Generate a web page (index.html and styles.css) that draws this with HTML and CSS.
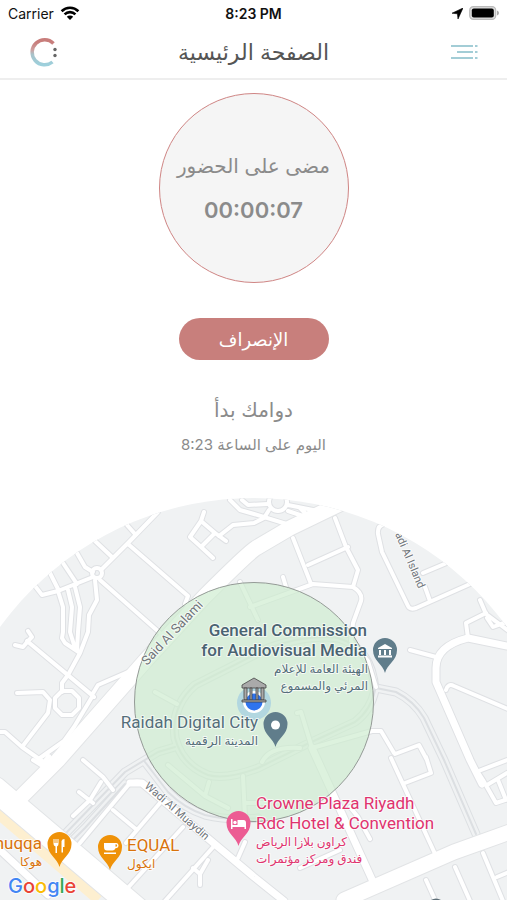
FILE: index.html
```html
<!DOCTYPE html>
<html lang="ar" dir="rtl">
<head>
<meta charset="utf-8">
<meta name="viewport" content="width=device-width, initial-scale=1">
<title>الصفحة الرئيسية</title>
<link rel="stylesheet" href="styles.css">
</head>
<body>
<div class="status" dir="ltr">
  <div class="status-side">
    <span>Carrier</span>
    <svg width="20" height="14" viewBox="0 0 20 14" aria-hidden="true">
      <g fill="none" stroke="#000" stroke-width="2.6"><path d="M1.6 5.2a12 12 0 0 1 16.8 0"/><path d="M4.6 8.4a7.6 7.6 0 0 1 10.8 0"/></g>
      <path d="M10 14 6.8 10.7a4.6 4.6 0 0 1 6.4 0z"/>
    </svg>
  </div>
  <time class="status-time">8:23 PM</time>
  <div class="status-side status-end">
    <svg width="11" height="11" viewBox="0 0 11 11" aria-hidden="true"><path d="M11 0 6 11 5.400 5.800 0 5.200z" stroke="#000" stroke-width=".6"/></svg>
    <svg width="30" height="14" viewBox="0 0 30 14" aria-hidden="true">
      <rect x=".7" y=".7" width="26" height="12.6" rx="3.6" fill="#ddd" stroke="#bbb" stroke-width="1.2"/>
      <rect x="2.8" y="2.4" width="22" height="9.2" rx="2"/>
      <path d="M28 4.6q2 .8 2 2.400t-2 2.400z" fill="#aaa"/>
    </svg>
  </div>
</div>
<header class="header">
  <button class="icon-button" type="button" aria-label="القائمة">
    <svg width="28" height="18" viewBox="0 0 28 18" aria-hidden="true">
      <path d="M1 3h22M7 9h16M1 15h22M25 3h2.500M25 9h2.500M25 15h2.500" fill="none" stroke="#a3cdd6" stroke-width="2"/>
    </svg>
  </button>
  <h1 class="title">الصفحة الرئيسية</h1>
  <a class="icon-button" href="#" aria-label="الرئيسية">
    <svg width="28" height="30" viewBox="0 0 28 30" aria-hidden="true">
      <defs><linearGradient id="ring" x1="0" y1="0" x2="0" y2="1"><stop offset=".1" stop-color="#c87d7b"/><stop offset=".4" stop-color="#cda09f"/><stop offset=".58" stop-color="#a9c2c9"/><stop offset="1" stop-color="#9dd0dc"/></linearGradient></defs>
      <path d="M24.500 6.500A12.500 12.500 0 1 0 23.500 25" fill="none" stroke="url(#ring)" stroke-width="3.500"/>
      <circle cx="26" cy="12.500" r="1.700" fill="#666"/><circle cx="26" cy="18.500" r="1.700" fill="#666"/>
    </svg>
  </a>
</header>
<main class="main">
  <section class="timer">
    <p class="timer-label">مضى على الحضور</p>
    <time class="timer-value">00:00:07</time>
  </section>
  <button class="leave" type="button">الإنصراف</button>
  <p class="shift">دوامك بدأ</p>
  <p class="shift-time">اليوم على الساعة 8:23</p>
  <svg class="map" viewBox="0 498 507 402" direction="ltr" role="img" aria-label="Map">
    <defs>
      <clipPath id="dome"><circle cx="253.500" cy="811.600" r="313.600"/></clipPath>
      <g id="minor">
        <path d="M127 525l8 9M95 541l17 16M77 553l8 14 8 5M63 563l14 21M50 573l9 18M35 586l7 9 16-4 35-14M58 591l5 16 0 25-1 6 3 5 15 10M68 590l4 17-2 25 5 16M75 587l5 20-2 25-1 18M95 580l2 20-8 15-1 17-8 21-12 22-6 8v9"/>
        <path d="M158 512l-30 31-27 27M128 544l60 52-3 8M100 580l60 53"/>
        <circle cx="97" cy="573" r="5"/>
        <path d="M62 691h10l7 7v10l-7 7H62l-7-7v-10zM27 641l65 54M15 645l8 2 5-6 4-4-4-6M27 641l67 56M92 695l6-10 30-13M92 697l-18 30-10 14-24 17M17 693l26-1 7 8-2 13-26 34M0 732h5l17 15 20 14M33 760l8 5 8-9"/>
        <path d="M204 512l-3 9-11 16 10 9 13 12M201 521l14 12 11 8M215 533l-14 14M219 536l14-11 21-2 10-5 5-8M230 500l10 10 14 4 36 11M242 500l6 5 20-1"/>
        <circle cx="278" cy="502" r="9"/><path d="M288 505l30 6M288 511l24 8M300 508l8 8"/>
        <path d="M293 538l18 46M308 565l40-18M335 518l11 29 12 23-5 17M250 607l63-23 40 3q10 6 8 14l-8 22-2 18 17 20 8 26M283 577l3 10"/>
        <path d="M384 524q-7 2-6 10l4 18 26 54q2 4 8 2l54-24M423 573l26-11M425 587l5 14M480 600l6 14 24 18M486 613l-20 10 2 15M487 618l6 9 16-6M410 650l26 7M446 690q2-7 8-4l54 23"/>
        <path d="M312 748l60-17 9 0 13 22M395 754l24-9 8 15M405 783l26-10-5-16M391 758l45 98M350 807l8 10 12 22M340 850l-40 18M470 760l13 20 13 23 12-4M476 772l31-12M487 785l20-12M498 780l8 20M426 880l10 22M455 867l15 34M483 853l20 48M497 877l12-5"/>
        <path d="M80 843l50-60q7-3 14 0M113 810l24 20M160 803l-34 40M183 827l-58 64M215 845l-50 56M193 868l7 6v11M200 874l8-14M238 858l7-16M83 760l20 17 10 13M101 782l-11 18-17 16M79 792l14 11"/>
        <path d="M240 582l18 38M155 692l22 12M297 713l4-1 11 36M168 765l37 31 23 12M205 796l4-14M243 776l2 42M245 803h20M262 762q8-16 38-14"/>
      </g>
      <g id="medium">
        <path d="M507 646l-39-8q-32 8-32 30v14l34 78 12 24M312 748l63 138M130 783h12l112 94 30 24M0 850l48 45"/>
      </g>
      <g id="rail">
        <path d="M376 688l20 4q18 9 28 26l20 42 32 74M67 846l18-18 40-44M125 772l33-20 17-5M125 772l-60 62M145 762l23 30q16 16 37 23 25 6 53 3"/>
        <path d="M375 690q-4 20-20 32l-50 23-47 23q-32 12-50 7-26-10-33-37-4-32 20-53l73-37q40-14 70-10 34 10 37 52"/>
      </g>
      <g id="major"><path d="M352 498l-62 30-34 20q-8 5-51 48L146 660 58 760 18 800M510 832l-56 20-110 48"/></g>
      <g id="highway"><path d="M-5 789l65 55 80 68"/></g>
    </defs>
    <g clip-path="url(#dome)">
      <rect class="land" y="498" width="507" height="402"/>
      <path class="service" d="M-5 808l105 90"/>
      <g class="roads">
        <use href="#rail" class="rail-case"/><use href="#rail" class="rail-fill"/><use href="#rail" class="rail-line"/>
        <use href="#minor" class="minor-case"/><use href="#medium" class="medium-case"/><use href="#major" class="major-case"/><use href="#highway" class="highway-case"/>
        <use href="#minor" class="minor-fill"/><use href="#medium" class="medium-fill"/><use href="#major" class="major-fill"/><use href="#highway" class="highway-fill"/>
      </g>
      <circle class="zone" cx="254" cy="702" r="119.500"/>
      <g class="street">
        <text transform="translate(147 666) rotate(-47)">Said Al Salami</text>
        <text class="street-small" transform="translate(395 534) rotate(67)">adi Al Island</text>
        <text class="street-small" transform="translate(144 787) rotate(41)">Wadi Al Muaydin</text>
      </g>
    </g>
    <g>
      <circle cx="254" cy="703" r="17" fill="#79b5e8" opacity=".4"/>
      <circle cx="254" cy="702" r="11" fill="#fff"/><circle cx="254" cy="702" r="8.500" fill="#2f74ee"/>
      <g stroke="#444" stroke-width=".8" fill="#aaa">
        <path d="M242 685l12-7 12 7v3h-24z"/><path d="M244 688h3v12h-3zM250 688h2v12h-2zM256 688h2v12h-2zM261 688h3v12h-3z"/><path d="M242 700h24v2h-24z"/>
      </g>
    </g>
    <g id="pins">
      <g fill="#607d8b">
        <path d="M385 673c-2-9-12-12-12-23a12 12 0 0 1 24 0c0 11-10 14-12 23z"/>
        <path d="M275.500 747c-2-9-12-12-12-23a12 12 0 0 1 24 0c0 11-10 14-12 23z"/>
      </g>
      <path d="M238.500 846c-2-9-12-12-12-23a12 12 0 0 1 24 0c0 11-10 14-12 23z" fill="#ec5c93"/>
      <g fill="#ef9208">
        <path d="M59.500 867c-2-9-12-12-12-23a12 12 0 0 1 24 0c0 11-10 14-12 23z"/>
        <path d="M110 870c-2-9-12-12-12-23a12 12 0 0 1 24 0c0 11-10 14-12 23z"/>
      </g>
      <g fill="#fff">
        <path d="M378 648l7-4 7 4v1h-14zM379 650h2v5h-2zM384 650h2v5h-2zM389 650h2v5h-2zM378 655.500h14v2h-14z"/>
        <circle cx="275.500" cy="725" r="4.500"/>
        <path d="M231 819h1.500v6h5v-5h6q2.500 0 2.500 3v6h-1.500v-2h-12v2H231z"/><circle cx="235" cy="822.500" r="1.700"/>
        <path d="M53.500 839h1v4h1v-4h1v4h1v-4h1v5q0 2-1.500 2.400v6.600h-1.500v-6.600q-2-.4-2-2.400zM63 852.500h-1.500V841q.5-2 3-2v8h-1.500z"/>
        <path d="M104 843h12.500q2 0 2 2.500t-3 2.800q-1 2.200-3 2.200h-5.500q-3 0-3-3.500zm11.500 1.200v2.600q1.700 0 1.700-1.300t-1.700-1.300z"/><path d="M104 852.500h12v1.500h-12z"/>
      </g>
    </g>
    <g class="place slate">
      <g class="right strong"><text x="367" y="636">General Commission</text><text x="367" y="656">for Audiovisual Media</text></g>
      <g class="right arabic"><text x="368" y="673">الهيئة العامة للإعلام</text><text x="368" y="690">المرئي والمسموع</text></g>
      <text class="right" x="258" y="728">Raidah Digital City</text>
      <text class="right arabic" x="258" y="745">المدينة الرقمية</text>
    </g>
    <g class="place pink">
      <text x="256" y="809">Crowne Plaza Riyadh</text><text x="256" y="829">Rdc Hotel &amp; Convention</text>
      <g class="arabic"><text x="256" y="846">كراون بلازا الرياض</text><text x="256" y="863">فندق ومركز مؤتمرات</text></g>
    </g>
    <g class="place orange">
      <text class="right" x="42" y="849">huqqa</text><text class="right arabic" x="42" y="866">هوكا</text>
      <text x="127" y="851">EQUAL</text><text class="arabic" x="127" y="868">ايكول</text>
    </g>
    <text class="brand" x="8" y="893"><tspan fill="#4285f4">G</tspan><tspan fill="#ea4335">o</tspan><tspan fill="#fbbc05">o</tspan><tspan fill="#4285f4">g</tspan><tspan fill="#34a853">l</tspan><tspan fill="#ea4335">e</tspan></text>
    <path d="M431 900q5-3 10 0z" fill="#5f6f78"/>
  </svg>
</main>
</body>
</html>
```
FILE: styles.css
```css
* { box-sizing: border-box; }
body { margin: 0; background: #fff; color: #555; font-family: Inter, "DejaVu Sans", sans-serif; overflow-x: hidden; }
p, h1 { margin: 0; font-weight: 400; }
button { border: 0; padding: 0; background: none; font: inherit; }

.status { display: flex; align-items: center; height: 26px; padding: 0 8px; color: #111; font-size: 14px; }
.status-side { flex: 1; display: flex; align-items: center; gap: 6px; }
.status-end { justify-content: flex-end; }
.status-time { font-weight: 600; }

.header { display: flex; align-items: center; justify-content: space-between; height: 54px; padding: 0 29px; border-bottom: 2px solid #eee; }
.icon-button { display: flex; }
.title { font-size: 22px; line-height: 32px; color: #555; }

.main { display: flex; flex-direction: column; align-items: center; padding-top: 13px; }
.timer { display: flex; flex-direction: column; align-items: center; gap: 14px; width: 190px; height: 190px; padding-top: 57px; border: 1px solid #cf8584; border-radius: 50%; background: #f5f5f5; color: #8b8b8b; }
.timer-label { font-size: 20px; line-height: 30px; white-space: nowrap; }
.timer-value { font-size: 22px; line-height: 30px; font-weight: 600; }
.leave { width: 150px; height: 42px; margin-top: 35px; border-radius: 21px; background: #c87f7c; color: #fff; font-size: 18px; }
.shift { margin-top: 34px; color: #8b8b8b; font-size: 20px; line-height: 32px; }
.shift-time { margin-top: 7px; color: #8b8b8b; font-size: 15px; line-height: 24px; }

.map { display: block; width: 100%; margin-top: 41px; direction: ltr; }
.land { fill: #f0f2f3; }
.service { fill: none; stroke: #fdefd0; stroke-width: 15; }
.roads { fill: none; stroke-linejoin: round; stroke-linecap: round; }
.minor-case { stroke: #dfe1e4; stroke-width: 6; }
.minor-fill { stroke: #fff; stroke-width: 4; }
.medium-case { stroke: #dfe1e4; stroke-width: 9; }
.medium-fill { stroke: #fff; stroke-width: 7; }
.major-case { stroke: #e2e4e6; stroke-width: 17; }
.major-fill { stroke: #fff; stroke-width: 15; }
.highway-case { stroke: #e2e4e6; stroke-width: 26; }
.highway-fill { stroke: #fff; stroke-width: 24; }
.rail-case { stroke: #dcdfe2; stroke-width: 9; }
.rail-fill { stroke: #f0f2f3; stroke-width: 7; }
.rail-line { stroke: #dcdfe2; stroke-width: 2; }
.zone { fill: rgba(206, 236, 208, .7); stroke: #949a96; stroke-width: 1; }

.place, .street, .brand { paint-order: stroke; stroke: rgba(255, 255, 255, .7); stroke-width: 2; stroke-linejoin: round; }
.place { font-size: 17px; font-family: Roboto, "DejaVu Sans", sans-serif; }
.strong { font-weight: 500; }
.right { text-anchor: end; }
.arabic { font-size: 12px; font-weight: 400; }
.slate { fill: #546e7a; }
.strong { fill: #4a6372; }
.pink { fill: #e0336e; }
.orange { fill: #d9730b; }
.street { fill: #70757a; font-family: Roboto, sans-serif; font-size: 13px; }
.street-small { font-size: 11px; }
.brand { font-family: Inter, sans-serif; font-size: 20px; font-weight: 500; }
```
